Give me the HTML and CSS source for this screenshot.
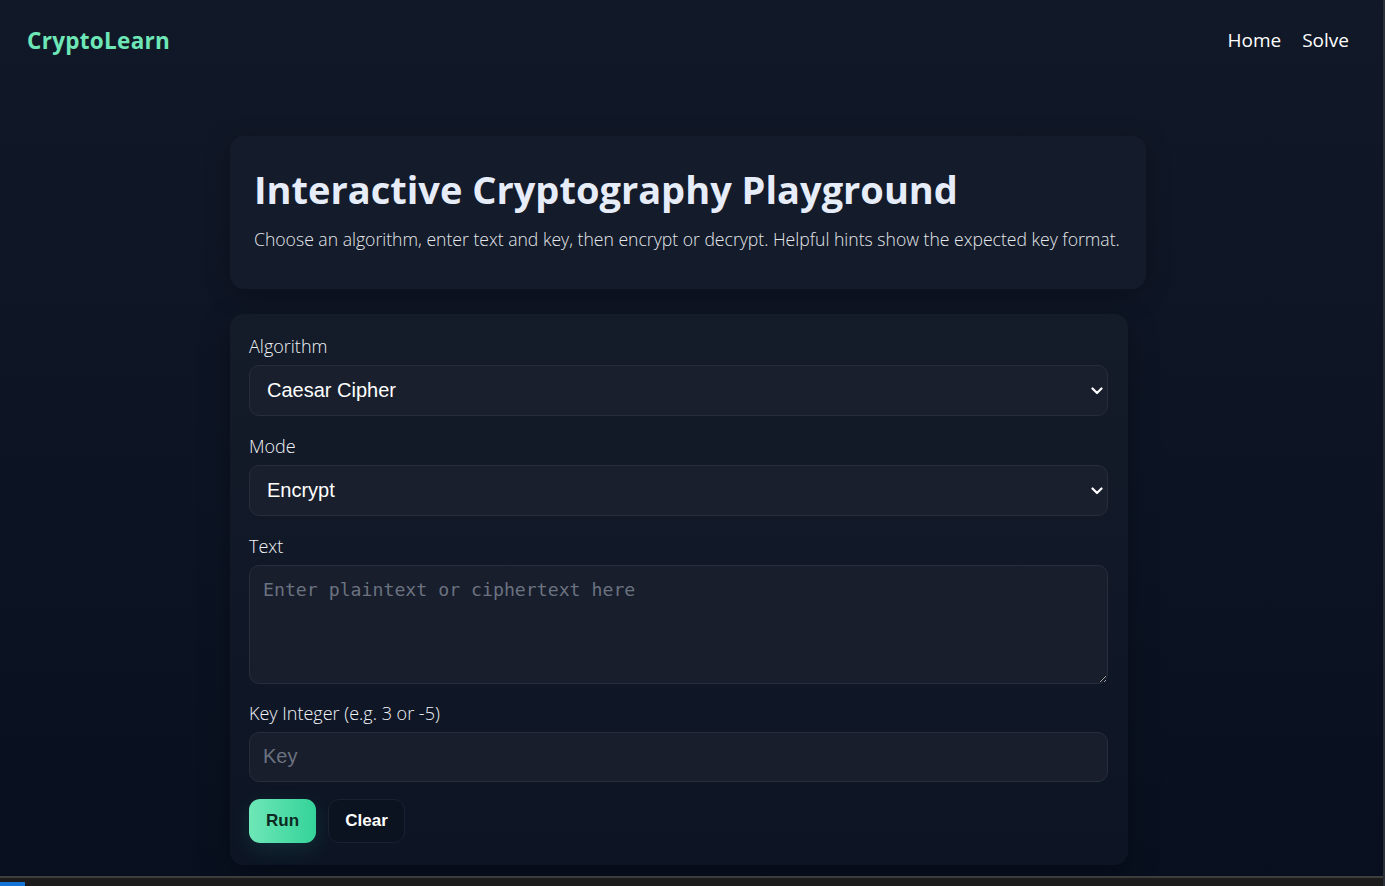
FILE: index.html
```html
<!DOCTYPE html>
<html lang="en">
<head>
<meta charset="utf-8">
<title>CryptoLearn</title>
<link rel="stylesheet" href="styles.css">
</head>
<body>
<nav class="nav">
  <a class="brand" href="#">CryptoLearn</a>
  <div class="links">
    <a href="#">Home</a>
    <a href="#">Solve</a>
  </div>
</nav>
<main class="main">
  <section class="intro">
    <h1>Interactive Cryptography Playground</h1>
    <p>Choose an algorithm, enter text and key, then encrypt or decrypt. Helpful hints show the expected key format.</p>
  </section>
  <form class="panel">
    <label class="label" for="algo">Algorithm</label>
    <div class="select-wrap">
      <select id="algo" class="field select">
        <option>Caesar Cipher</option>
      </select>
      <svg class="chev" viewBox="0 0 12 8" width="12" height="8"><path d="M1.5 1.5 L6 6 L10.5 1.5" fill="none" stroke="#ffffff" stroke-width="2.2" stroke-linecap="round" stroke-linejoin="round"/></svg>
    </div>
    <label class="label" for="mode">Mode</label>
    <div class="select-wrap">
      <select id="mode" class="field select">
        <option>Encrypt</option>
      </select>
      <svg class="chev" viewBox="0 0 12 8" width="12" height="8"><path d="M1.5 1.5 L6 6 L10.5 1.5" fill="none" stroke="#ffffff" stroke-width="2.2" stroke-linecap="round" stroke-linejoin="round"/></svg>
    </div>
    <label class="label" for="txt">Text</label>
    <textarea id="txt" class="field area" placeholder="Enter plaintext or ciphertext here"></textarea>
    <label class="label" for="key">Key Integer (e.g. 3 or -5)</label>
    <input id="key" class="field input" placeholder="Key">
    <div class="actions">
      <button type="button" class="btn run">Run</button>
      <button type="button" class="btn clear">Clear</button>
    </div>
  </form>
</main>
<div class="taskbar"><span class="start"></span></div>
<div class="edge"></div>
</body>
</html>
```

FILE: styles.css
```css
html, body {
  margin: 0;
  padding: 0;
}
body {
  min-height: 886px;
  background: linear-gradient(180deg, #111827 0%, #0c1424 60%, #08101f 100%);
  color: #e5e7eb;
  font-family: "Open Sans", "Noto Sans", sans-serif;
}
.nav {
  height: 80px;
  display: flex;
  align-items: center;
  justify-content: space-between;
  padding: 0 36px 0 27px;
}
.brand {
  color: #6ee7b7;
  font-weight: 700;
  font-size: 22.5px;
  text-decoration: none;
  letter-spacing: 0.3px;
}
.links {
  display: flex;
  gap: 21px;
}
.links a {
  color: #ffffff;
  text-decoration: none;
  font-size: 19px;
}
.main {
  padding: 56px 0 0 230px;
}
.intro {
  width: 868px;
  padding: 31px 24px 38px 24px;
  background: #141b2a;
  border-radius: 14px;
  box-shadow: 0 6px 24px rgba(0,0,0,0.25);
}
.intro h1 {
  margin: 0;
  font-size: 38px;
  font-weight: 700;
  color: #e6ecf8;
  line-height: 1.2;
}
.intro p {
  margin: 14px 0 0;
  font-size: 17.6px;
  font-weight: 300;
  color: #e5e7eb;
  white-space: nowrap;
}
.panel {
  margin-top: 25px;
  width: 859px;
  padding: 21px 20px 22px 19px;
  border-radius: 14px;
  background: linear-gradient(180deg, #141b29 0%, #0d1525 100%);
  box-shadow: 0 10px 30px rgba(0,0,0,0.35);
  display: flex;
  flex-direction: column;
}
.label {
  font-size: 18px;
  font-weight: 300;
  color: #f1f3f7;
  line-height: 22px;
  margin-bottom: 8px;
}
.field {
  box-sizing: border-box;
  width: 100%;
  background: #1a1f2d;
  border: 1px solid #262d3c;
  border-radius: 10px;
  color: #ffffff;
  outline: none;
}
.select-wrap {
  position: relative;
  margin-bottom: 19px;
}
.select {
  appearance: none;
  -webkit-appearance: none;
  height: 51px;
  padding: 0 17px;
  font-family: "Liberation Sans", Arial, sans-serif;
  font-size: 20px;
  display: block;
}
.chev {
  position: absolute;
  right: 5px;
  top: 22px;
  pointer-events: none;
}
.area {
  height: 119px;
  padding: 13px 13px;
  font-family: "DejaVu Sans Mono", "Liberation Mono", monospace;
  font-size: 18.2px;
  margin-bottom: 18px;
  resize: vertical;
  background: #181e2c;
}
.area::placeholder {
  color: #6b7280;
}
.input {
  height: 50px;
  padding: 0 13px;
  font-family: "Liberation Sans", Arial, sans-serif;
  font-size: 20px;
  background: #181e2c;
}
.input::placeholder {
  color: #6b7280;
}
.actions {
  display: flex;
  gap: 12px;
  margin-top: 17px;
}
.btn {
  height: 44px;
  border-radius: 11px;
  font-family: "Liberation Sans", Arial, sans-serif;
  font-weight: 700;
  font-size: 17px;
  cursor: pointer;
}
.run {
  width: 67px;
  border: none;
  color: #0d2a22;
  background: linear-gradient(90deg, #6ee7b7 0%, #34d399 100%);
  box-shadow: 0 6px 20px rgba(52, 211, 153, 0.12);
}
.clear {
  width: 77px;
  background: #0b1220;
  border: 1px solid #1a2132;
  color: #ffffff;
}
.taskbar {
  position: fixed;
  left: 0;
  right: 0;
  bottom: 0;
  height: 8px;
  background: #1c1c1c;
  border-top: 2px solid #3d3d3d;
}
.start {
  position: absolute;
  left: 0;
  bottom: 0;
  width: 25px;
  height: 4px;
  background: #1473d6;
}
.edge {
  position: fixed;
  top: 0;
  right: 0;
  bottom: 0;
  width: 2px;
  background: #2b3038;
}
```
